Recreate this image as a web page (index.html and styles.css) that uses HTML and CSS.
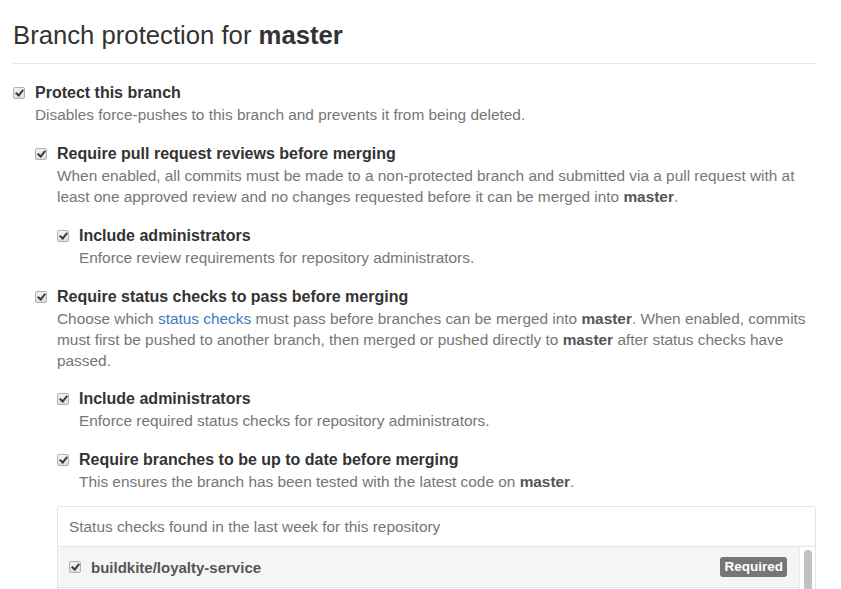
FILE: index.html
```html
<!DOCTYPE html>
<html>
<head>
<meta charset="utf-8">
<link rel="stylesheet" href="styles.css">
</head>
<body>
<div class="page">
  <h2 class="subhead">Branch protection for <strong>master</strong></h2>

  <div class="opt">
    <div class="row"><span class="cb"></span><span class="label">Protect this branch</span></div>
    <p class="note">Disables force-pushes to this branch and prevents it from being deleted.</p>

    <div class="opt sub">
      <div class="row"><span class="cb"></span><span class="label">Require pull request reviews before merging</span></div>
      <p class="note">When enabled, all commits must be made to a non-protected branch and submitted via a pull request with at least one approved review and no changes requested before it can be merged into <strong>master</strong>.</p>

      <div class="opt sub">
        <div class="row"><span class="cb"></span><span class="label">Include administrators</span></div>
        <p class="note">Enforce review requirements for repository administrators.</p>
      </div>
    </div>

    <div class="opt sub">
      <div class="row"><span class="cb"></span><span class="label">Require status checks to pass before merging</span></div>
      <p class="note">Choose which <a href="#">status checks</a> must pass before branches can be merged into <strong>master</strong>. When enabled, commits must first be pushed to another branch, then merged or pushed directly to <strong>master</strong> after status checks have passed.</p>

      <div class="opt sub tight">
        <div class="row"><span class="cb"></span><span class="label">Include administrators</span></div>
        <p class="note">Enforce required status checks for repository administrators.</p>
      </div>

      <div class="opt sub">
        <div class="row"><span class="cb"></span><span class="label">Require branches to be up to date before merging</span></div>
        <p class="note">This ensures the branch has been tested with the latest code on <strong>master</strong>.</p>
      </div>

      <div class="box">
        <div class="box-header">Status checks found in the last week for this repository</div>
        <div class="box-body">
          <div class="check-row">
            <span class="cb"></span>
            <span class="check-name">buildkite/loyalty-service</span>
            <span class="badge">Required</span>
          </div>
          <div class="scroll"><span class="thumb"></span></div>
        </div>
      </div>
    </div>
  </div>
</div>
</body>
</html>
```

FILE: styles.css
```css
html, body { margin: 0; padding: 0; background: #fff; }
body {
  font-family: "Liberation Sans", Arial, sans-serif;
  color: #333;
  overflow: hidden;
}
.page {
  padding: 0 25px 0 13px;
  width: 803px;
}
.subhead {
  margin: 0;
  padding: 18px 0 11px;
  font-size: 25.7px;
  font-weight: 400;
  line-height: 34px;
  color: #333;
  border-bottom: 1px solid #e5e5e5;
}
.subhead strong { font-weight: 700; }
.opt { margin-top: 18px; }
.opt.tight { margin-top: 17px; }
.sub { margin-left: 22px; }
.row {
  display: flex;
  align-items: center;
  height: 22px;
}
.cb {
  flex: none;
  width: 10px;
  height: 10px;
  border: 1px solid #b0b0b0;
  border-radius: 2px;
  background: linear-gradient(#f4f4f4, #dedede);
  position: relative;
  margin-right: 10px;
}
.cb::after {
  content: "";
  position: absolute;
  left: 3px;
  top: 0px;
  width: 3px;
  height: 6px;
  border: solid #3a3a3a;
  border-width: 0 2px 2px 0;
  transform: rotate(40deg);
}
.label {
  font-size: 16px;
  font-weight: 700;
  color: #333;
}
.note {
  margin: 0 0 0 22px;
  font-size: 15.4px;
  line-height: 21px;
  color: #767676;
}
.note strong { color: #555; font-weight: 700; }
.note a { color: #4078c0; text-decoration: none; }
.box {
  margin: 14px 0 0 22px;
  border: 1px solid #e5e5e5;
  border-radius: 3px;
  overflow: hidden;
}
.box-header {
  height: 39px;
  line-height: 39px;
  padding-left: 11px;
  font-size: 15.4px;
  color: #767676;
  border-bottom: 1px solid #e5e5e5;
}
.box-body {
  display: flex;
  height: 60px;
}
.check-row {
  flex: 1;
  display: flex;
  align-items: center;
  height: 40px;
  padding-left: 11px;
  padding-right: 12px;
  background: #f5f5f5;
  border-bottom: 1px solid #e5e5e5;
}
.check-name {
  flex: 1;
  font-size: 15px;
  font-weight: 700;
  color: #555;
}
.badge {
  background: #767676;
  color: #fff;
  font-size: 13.5px;
  font-weight: 700;
  padding: 1px 4px;
  border-radius: 3px;
  line-height: 18px;
}
.scroll {
  flex: none;
  width: 15px;
  background: #fff;
  border-left: 1px solid #e8e8e8;
  display: flex;
  justify-content: center;
  padding-top: 3px;
}
.thumb {
  display: block;
  width: 8px;
  height: 60px;
  border-radius: 4px;
  background: #c1c1c1;
}
```
